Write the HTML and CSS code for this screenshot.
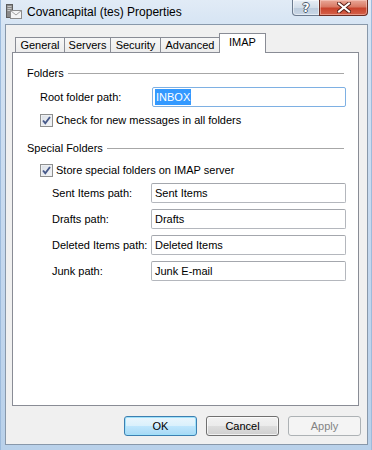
FILE: index.html
```html
<!DOCTYPE html>
<html lang="en">
<head>
    <meta charset="UTF-8">
    <title>Covancapital (tes) Properties</title>
    <link rel="stylesheet" href="styles.css">
</head>
<body>
    <div class="window">
        <div class="titlebar">
            <svg class="app-icon" width="16" height="16" viewBox="0 0 16 16">
                <rect x="0.5" y="0.5" width="6" height="13" fill="#8a8a8a" stroke="#5e5e5e"/>
                <rect x="1.5" y="2" width="4" height="1" fill="#c8c8c8"/>
                <rect x="1.5" y="4" width="4" height="1" fill="#c8c8c8"/>
                <rect x="1.5" y="6" width="4" height="1" fill="#c8c8c8"/>
                <rect x="4.5" y="6.5" width="11" height="8" fill="#f4f4f4" stroke="#8c8c8c"/>
                <path d="M4.5 6.5 L10 11 L15.5 6.5" fill="none" stroke="#a0a0a0"/>
            </svg>
            <span class="title">Covancapital (tes) Properties</span>
            <div class="caption-buttons">
                <span class="cap-btn help">?</span>
                <span class="cap-btn close">
                    <svg width="14" height="11" viewBox="0 0 14 11">
                        <path d="M2 1.5 L12 9.5 M12 1.5 L2 9.5" stroke="#5a1f16" stroke-width="4" stroke-linecap="square"/>
                        <path d="M2 1.5 L12 9.5 M12 1.5 L2 9.5" stroke="#ffffff" stroke-width="2" stroke-linecap="square"/>
                    </svg>
                </span>
            </div>
        </div>

        <div class="client">
            <div class="tabs">
                <span class="tab tab-general">General</span>
                <span class="tab tab-servers">Servers</span>
                <span class="tab tab-security">Security</span>
                <span class="tab tab-advanced">Advanced</span>
                <span class="tab active">IMAP</span>
            </div>

            <div class="panel">
                <div class="group-title"><span>Folders</span></div>

                <div class="field root-field">
                    <label>Root folder path:</label>
                    <div class="textbox focused"><span class="selected-text">INBOX</span></div>
                </div>

                <div class="check-row first-check">
                    <span class="checkbox">
                        <svg width="13" height="13" viewBox="0 0 13 13">
                            <path d="M3 6.5 L5.3 9.2 L10 3" fill="none" stroke="#46598a" stroke-width="1.9"/>
                        </svg>
                    </span>
                    <span>Check for new messages in all folders</span>
                </div>

                <div class="group-title special"><span>Special Folders</span></div>

                <div class="check-row">
                    <span class="checkbox">
                        <svg width="13" height="13" viewBox="0 0 13 13">
                            <path d="M3 6.5 L5.3 9.2 L10 3" fill="none" stroke="#46598a" stroke-width="1.9"/>
                        </svg>
                    </span>
                    <span>Store special folders on IMAP server</span>
                </div>

                <div class="folder-grid">
                    <label>Sent Items path:</label>
                    <div class="textbox">Sent Items</div>
                    <label>Drafts path:</label>
                    <div class="textbox">Drafts</div>
                    <label>Deleted Items path:</label>
                    <div class="textbox">Deleted Items</div>
                    <label>Junk path:</label>
                    <div class="textbox">Junk E-mail</div>
                </div>
            </div>

            <div class="actions">
                <button class="btn default">OK</button>
                <button class="btn">Cancel</button>
                <button class="btn disabled">Apply</button>
            </div>
        </div>
    </div>
</body>
</html>
```

FILE: styles.css
```css
* {
    box-sizing: border-box;
}

body {
    margin: 0;
    background: #ffffff;
    font-family: "Liberation Sans", Arial, sans-serif;
    font-size: 11px;
    color: #000;
}

.window {
    width: 372px;
    height: 450px;
    display: flex;
    flex-direction: column;
    background: linear-gradient(180deg, #e1ebf6 0, #d4e3f3 30px, #c3d7ee 60%, #b9d1ea 100%);
    box-shadow: inset 1px 0 #9dbbdc, inset -1px 0 #9dbbdc;
}

/* title bar */
.titlebar {
    height: 24px;
    display: flex;
    align-items: flex-start;
    padding: 0 4px 0 6px;
}

.app-icon {
    margin-top: 4px;
}

.title {
    margin-left: 5px;
    margin-top: 5px;
    font-size: 12px;
    line-height: 14px;
}

.caption-buttons {
    margin-left: auto;
    display: flex;
}

.cap-btn {
    height: 16px;
    display: flex;
    align-items: center;
    justify-content: center;
    border: 1px solid #6c7b8f;
    border-top: none;
}

.help {
    width: 28px;
    border-radius: 0 0 0 4px;
    background: linear-gradient(180deg, #e8eef6 0, #d3deea 50%, #bccbdc 51%, #c9d6e6 100%);
    color: #fff;
    font-family: "DejaVu Sans", sans-serif;
    font-size: 12px;
    font-weight: bold;
    text-shadow: 1px 0 #4d5b6e, -1px 0 #4d5b6e, 0 1px #4d5b6e, 0 -1px #4d5b6e;
    box-shadow: inset 0 0 0 1px rgba(255, 255, 255, 0.5);
}

.close {
    width: 49px;
    margin-left: -1px;
    border-color: #6b2c22;
    border-radius: 0 0 4px 0;
    background: linear-gradient(180deg, #e9a898 0, #d97a65 45%, #c8432c 55%, #d5614a 100%);
    box-shadow: inset 0 0 0 1px rgba(255, 220, 210, 0.45);
}

/* client area */
.client {
    flex: 1;
    margin: 0 4px 5px 5px;
    border: 1px solid #8898aa;
    background: #f0f0f0;
    padding: 8px 6px 0 6px;
    display: flex;
    flex-direction: column;
}

.tabs {
    height: 20px;
    display: flex;
    align-items: flex-end;
    padding-left: 3px;
    position: relative;
    z-index: 1;
}

.tab {
    height: 15px;
    margin-bottom: 1px;
    margin-right: -1px;
    padding: 0;
    text-align: center;
    line-height: 14px;
    border: 1px solid #898c95;
    border-bottom: none;
    background: linear-gradient(180deg, #f7f7f7 0, #ececec 100%);
    white-space: nowrap;
}

.tab-general { width: 50px; }
.tab-servers { width: 47px; }
.tab-security { width: 51px; }
.tab-advanced { width: 60px; }

.tab.active {
    width: 47px;
    height: 20px;
    margin: 0;
    padding-top: 1px;
    background: #fff;
    position: relative;
}

.panel {
    flex: 1;
    margin-top: -1px;
    margin-right: 2px;
    background: #fff;
    border: 1px solid #898c95;
    padding: 13px 12px 0 14px;
}

.group-title {
    display: flex;
    align-items: center;
    gap: 4px;
    line-height: 14px;
    margin-right: 2px;
}

.group-title::after {
    content: "";
    flex: 1;
    border-top: 1px solid #a7a7a7;
    margin-top: 1px;
}

.group-title.special {
    margin-top: 14px;
}

.field {
    display: flex;
    align-items: center;
}

.root-field {
    margin-top: 7px;
    margin-left: 13px;
}

.root-field label {
    width: 112px;
}

.textbox {
    flex: 1;
    height: 20px;
    line-height: 18px;
    padding: 0 3px;
    border: 1px solid #b4b7bd;
    border-top-color: #a4a7ad;
    border-radius: 2px;
    background: #fff;
    white-space: nowrap;
}

.textbox.focused {
    border-color: #7eb0e3;
    padding: 1px 2px;
    line-height: 16px;
}

.selected-text {
    display: inline-block;
    background: #3399ff;
    color: #fff;
    padding: 0 1px;
    line-height: 16px;
}

.check-row {
    display: flex;
    align-items: center;
    gap: 3px;
    margin-top: 9px;
    margin-left: 13px;
    line-height: 13px;
}

.first-check {
    margin-top: 7px;
}

.checkbox {
    width: 13px;
    height: 13px;
    border: 1px solid #8e8f8f;
    background: linear-gradient(135deg, #d9dee5 0, #f6f7f9 100%);
    box-shadow: inset 0 0 0 1px #eef0f3;
    position: relative;
}

.checkbox svg {
    position: absolute;
    left: -1px;
    top: -1px;
}

.folder-grid {
    display: grid;
    grid-template-columns: 99px 1fr;
    row-gap: 6px;
    align-items: center;
    margin-top: 6px;
    margin-left: 25px;
}

/* buttons */
.actions {
    display: flex;
    justify-content: flex-end;
    gap: 9px;
    padding: 10px 0 8px;
}

.btn {
    width: 73px;
    height: 20px;
    padding: 0;
    font-family: "Liberation Sans", Arial, sans-serif;
    font-size: 11px;
    color: #000;
    border: 1px solid #707070;
    border-radius: 3px;
    background: linear-gradient(180deg, #f2f2f2 0, #ebebeb 50%, #dddddd 51%, #cfcfcf 100%);
    box-shadow: inset 0 0 0 1px rgba(255, 255, 255, 0.7);
}

.btn.default {
    border-color: #3c7fb1;
    background: linear-gradient(180deg, #eaf6fd 0, #d9f0fc 50%, #bee6fd 51%, #a7d9f5 100%);
    box-shadow: inset 0 0 0 1px #9fe1fa;
}

.btn.disabled {
    border-color: #adb2b5;
    background: #f4f4f4;
    color: #838383;
    box-shadow: none;
}
```
